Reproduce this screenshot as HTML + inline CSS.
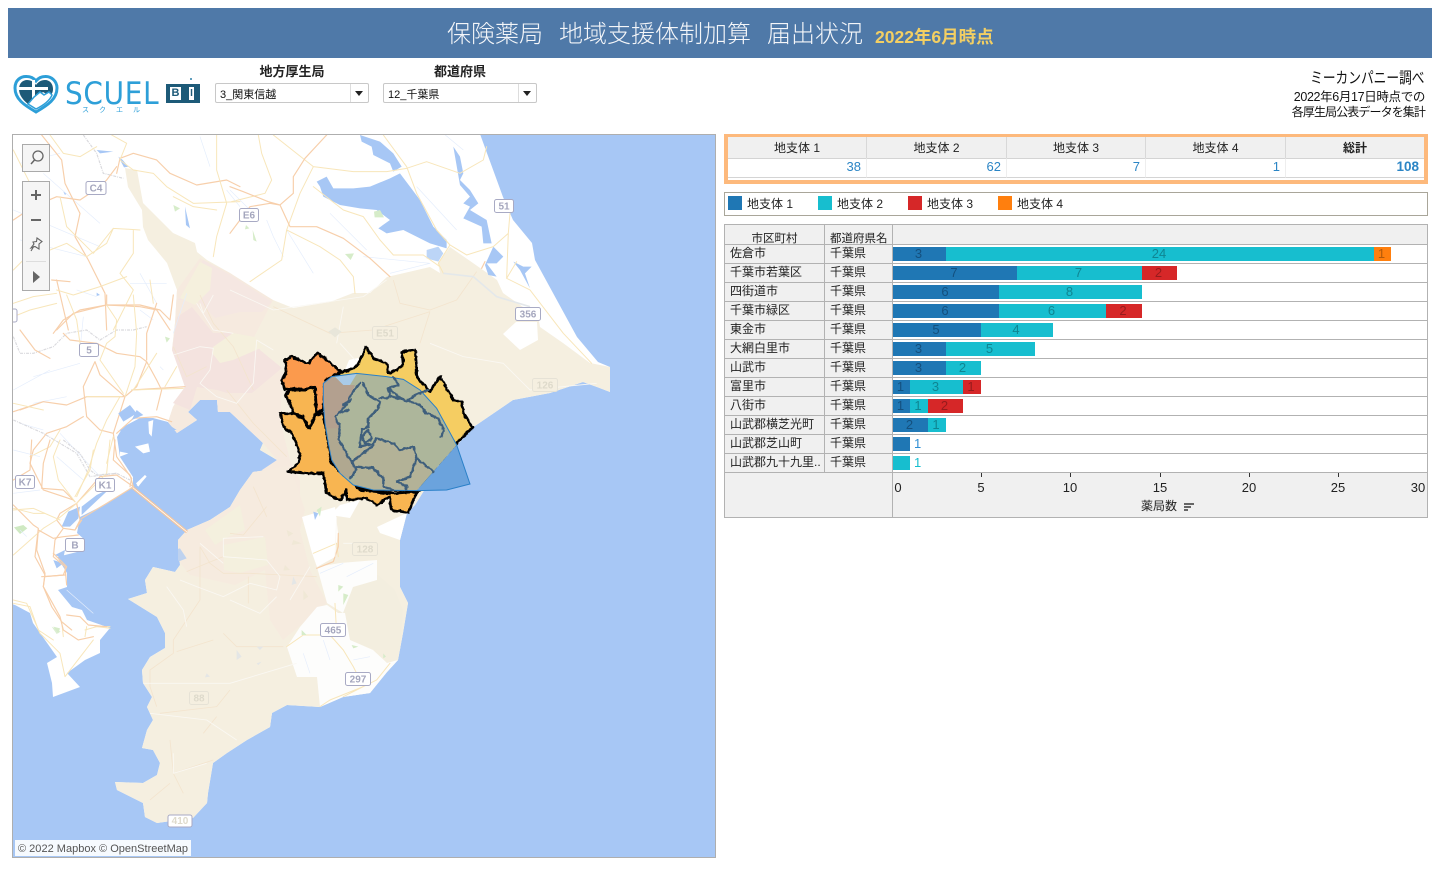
<!DOCTYPE html>
<html lang="ja"><head><meta charset="utf-8"><title>保険薬局 地域支援体制加算 届出状況</title>
<style>
html,body{margin:0;padding:0;background:#fff;width:1440px;height:870px;overflow:hidden}
body{font-family:"Liberation Sans","Noto Sans CJK JP",sans-serif;color:#222;position:relative}
.a{position:absolute;white-space:nowrap}
.sel{position:absolute;top:83px;width:152px;height:18px;border:1px solid #c8c8c8;border-radius:2px;background:#fff;font-size:11px;line-height:22px;text-indent:4px;color:#111}
.sel i{position:absolute;right:17px;top:0;height:18px;border-left:1px solid #ddd}
.sel b{position:absolute;right:5px;top:7px;border:4px solid transparent;border-top:5px solid #222;border-bottom:0}
.kh{position:absolute;top:137px;height:21px;background:#f0f0f0;border-right:1px solid #d8d8d8;font-size:12px;line-height:23px;text-align:center;color:#222}
.kv{position:absolute;top:158px;height:20px;border-top:1px solid #d4d4d4;border-bottom:1px solid #d4d4d4;border-right:1px solid #eee;font-size:13px;line-height:16px;text-align:right;color:#2b85c5;padding-right:5px;box-sizing:border-box}
.sw{position:absolute;top:196px;width:14px;height:14px}
.lg{position:absolute;top:196px;font-size:12px;line-height:17px;color:#222;white-space:nowrap}
.row{position:absolute;left:725px;width:702px;height:19px;border-bottom:1px solid #b2b2b2;box-sizing:border-box;font-size:12px;line-height:16px;color:#222}
.row u{text-decoration:none;position:absolute;left:5px;top:0}
.row s{text-decoration:none;position:absolute;left:105px;top:0}
.row .h{position:absolute;left:0;top:0;width:167px;height:18px;background:#f0f0f0}
.bars{position:absolute;left:168px;top:2px;height:14px;display:flex;font-size:13px;line-height:14px;text-align:center}
.bars span{display:block;height:14px;padding-right:2px;box-sizing:border-box}
.b1{background:#1f77b4;color:#14507e}.b2{background:#17becf;color:#0f8592}.b3{background:#d62728;color:#961b1c}.b4{background:#ff7f0e;color:#b3590a}
.tk{position:absolute;top:473px;width:1px;height:4px;background:#333}
.tl{position:absolute;top:480px;font-size:13px;line-height:16px;color:#222;width:30px;text-align:center}
.v{position:absolute;width:1px;background:#b2b2b2}
</style></head><body>

<div class="a" style="left:8px;top:8px;width:1424px;height:50px;background:#4f79a8"></div>
<div class="a" style="left:447px;top:14px;font-size:24px;line-height:36px;color:#f4f6f9;font-weight:300;font-family:'Noto Sans CJK JP',sans-serif">保険薬局</div>
<div class="a" style="left:559px;top:14px;font-size:24px;line-height:36px;color:#f4f6f9;font-weight:300;font-family:'Noto Sans CJK JP',sans-serif">地域支援体制加算</div>
<div class="a" style="left:767px;top:14px;font-size:24px;line-height:36px;color:#f4f6f9;font-weight:300;font-family:'Noto Sans CJK JP',sans-serif">届出状況</div>
<div class="a" style="left:875px;top:24px;font-size:17.500px;line-height:26px;color:#f3cf63;font-weight:bold">2022年6月時点</div>

<!-- logo -->
<svg class="a" style="left:13px;top:74px" width="46" height="41" viewBox="0 0 46 41">
<path d="M23 38C11 31 2 25 2 14C2 6 8 2 14 2.500C18 2.500 21 4.500 23 7C25 4.500 28 2.500 32 2.500C38 2 44 7 44 14C44 25 35 31 23 38Z" fill="#fff" stroke="#2d9fd8" stroke-width="3"/>
<path d="M6 15C6 9 10 6 14 6C18 6 21 8 23 11C25 8 28 6 32 6C37 6 40 10 40 15C40 18 39 20 37 22L30 18L26 21L21 24L15 30C10 26 6 21 6 15Z" fill="#1d5a78"/>
<path d="M19 6H22V13H35V16H22V24H19V16H6V13H19Z" fill="#fff"/>
<path d="M15 30L21 23L27 18L31 21L36 18L39 21C37 26 31 31 23 35Z" fill="#fff" stroke="#2d9fd8" stroke-width="1.500"/>
</svg>
<div class="a" style="left:65px;top:75px;font-size:31px;line-height:38px;color:#2d9fd8;letter-spacing:.8px;font-family:'DejaVu Sans','Liberation Sans',sans-serif;font-weight:normal;transform-origin:0 0;transform:scale(.9,1)">SCUEL</div>
<div class="a" style="left:82px;top:106px;font-size:7px;line-height:9px;color:#2d9fd8;letter-spacing:10px;font-family:'Noto Sans CJK JP',sans-serif">スクエル</div>
<div class="a" style="left:166px;top:84px;width:34px;height:19px;background:#1d5a78"></div>
<div class="a" style="left:170px;top:87px;width:11px;height:13px;background:#fff;color:#1d5a78;font:bold 11px/13px 'Liberation Sans',sans-serif;text-align:center">B</div>
<div class="a" style="left:189px;top:87px;width:5px;height:13px;background:#fff;color:#1d5a78;font:bold 10px/13px 'Liberation Sans',sans-serif;text-align:center">I</div>
<div class="a" style="left:190px;top:78px;width:2px;height:2px;background:#2d7fa8;border-radius:50%"></div>

<div class="a" style="left:232px;width:120px;top:63px;text-align:center;font-size:13px;line-height:18px;font-weight:bold;color:#222">地方厚生局</div>
<div class="sel" style="left:215px">3_関東信越<i></i><b></b></div>
<div class="a" style="left:400px;width:120px;top:63px;text-align:center;font-size:13px;line-height:18px;font-weight:bold;color:#222">都道府県</div>
<div class="sel" style="left:383px">12_千葉県<i></i><b></b></div>

<div class="a" style="right:15px;top:69px;font-size:15.500px;line-height:20px;color:#111;transform-origin:100% 50%;transform:scaleX(.82)">ミーカンパニー調べ</div>
<div class="a" style="right:15px;top:89px;font-size:12.500px;line-height:17px;color:#111;letter-spacing:-.35px">2022年6月17日時点での</div>
<div class="a" style="right:15px;top:104px;font-size:12px;line-height:17px;color:#111;letter-spacing:-.9px">各厚生局公表データを集計</div>

<!-- map -->
<svg class="a" style="left:0;top:0" width="1440" height="870" viewBox="0 0 1440 870">
<defs>
<clipPath id="mc"><rect x="13" y="135" width="702" height="722"/></clipPath>
<filter id="jag" x="-10%" y="-10%" width="120%" height="120%" color-interpolation-filters="sRGB"><feTurbulence type="fractalNoise" baseFrequency=".07" numOctaves="2" seed="4" result="n"/><feDisplacementMap in="SourceGraphic" in2="n" scale="10" xChannelSelector="R" yChannelSelector="G"/></filter>
<style>
.s text{font:bold 10px "Liberation Sans",sans-serif;fill:#a4a6bd;text-anchor:middle}
.f text{font:bold 10px "Liberation Sans",sans-serif;fill:#dedacb;text-anchor:middle}
.o{fill:none;stroke:#f7cfab;stroke-width:3.500;stroke-linejoin:round;stroke-linecap:round}
.y{fill:none;stroke:#f8e6ba;stroke-width:3;stroke-linejoin:round;stroke-linecap:round}
.w{fill:none;stroke:#e4edfc;stroke-width:2;stroke-linejoin:round}
.g{fill:none;stroke:#dadade;stroke-width:3.500;stroke-dasharray:9 3 3 3}
.fo{fill:none;stroke:#f3e4ce;stroke-width:2.500;stroke-linejoin:round}
.fw{fill:none;stroke:#faf8f3;stroke-width:2.500;stroke-linejoin:round}
.d{fill:none;stroke:#3f5f7c;stroke-width:7;stroke-linejoin:round;stroke-linecap:round}
</style>
</defs>
<g clip-path="url(#mc)">
<rect x="12" y="134" width="704" height="724" fill="#a7c7f5"/>
<polygon fill="#fff" points="12,134 480,134 503,197 513,220 532,243 535,260 553,293 577,337 598,362 610,367 610,392 597,387 583,382 550,393 513,400 472,428 440,465 415,505 407,513 400,540 400,587 408,603 403,633 398,660 387,672 370,693 343,697 320,707 287,705 272,713 270,727 247,740 227,753 213,763 208,793 207,803 193,818 157,823 145,817 143,803 117,790 115,782 143,783 157,775 160,763 153,750 142,748 147,730 153,720 147,707 152,697 143,683 142,670 150,657 165,648 165,633 157,617 128,599 147,593 145,580 153,567 175,572 180,565 178,540 187,530 210,520 230,507 240,490 253,472 267,470 277,460 260,450 263,443 230,412 218,412 217,400 200,400 188,412 197,420 177,433 168,422 153,418 140,418 123,427 117,437 120,457 133,477 133,487 123,493 100,507 80,517 77,533 85,540 77,552 57,557 67,573 67,587 58,590 72,607 82,610 87,620 110,628 100,640 100,653 85,660 67,673 80,687 53,697 52,683 47,663 57,657 33,623 30,613 15,605 12,604"/>
<!-- Chiba -->
<polygon fill="#f5efe0" points="125,168 137,170 143,203 173,233 195,243 197,252 207,260 230,273 250,287 273,300 293,308 330,302 353,293 370,293 387,277 430,267 440,273 438,263 450,247 483,270 497,280 503,293 523,307 537,310 540,327 563,343 590,363 610,367 610,392 597,387 583,382 550,393 513,400 472,428 440,465 415,505 407,513 400,540 400,587 408,603 403,633 398,660 387,672 370,693 343,697 320,707 287,705 272,713 270,727 247,740 227,753 213,763 208,793 207,803 193,818 157,823 145,817 143,803 117,790 115,782 143,783 157,775 160,763 153,750 142,748 147,730 153,720 147,707 152,697 143,683 142,670 150,657 165,648 165,633 157,617 128,599 147,593 145,580 153,567 175,572 180,565 178,540 187,530 210,520 230,507 240,490 253,472 267,470 277,460 260,450 263,443 230,412 218,412 217,400 200,400 188,412 197,420 177,433 168,422 173,407 185,387 180,370 172,350 175,323 177,290 167,263 148,240 143,227 142,210 128,187"/>
<!-- peach NW -->
<polygon fill="#f6eadf" points="168,422 173,407 185,387 180,370 172,350 175,323 177,290 200,258 230,273 273,300 250,345 262,360 283,372 280,420 290,460 300,480 300,520 262,470 277,460 263,443 230,412 218,412 217,400 200,400 188,412 197,420 177,433"/>
<polygon fill="#f4e3df" points="177,317 192,307 213,333 233,333 253,337 260,350 282,368 252,393 227,393 217,390 197,387 190,410 173,403 185,387 172,350"/>
<polygon fill="#f5e7e2" points="177,300 190,290 203,260 232,276 272,302 262,312 240,312 215,318 197,300"/>
<polygon fill="#f5f0dd" points="213,347 233,333 255,337 263,347 233,360 220,363 212,353"/>
<polygon fill="#f5f0dd" points="180,298 200,262 212,268 210,290 195,305"/>
<!-- peach SW -->
<polygon fill="#f6ebdf" points="178,540 187,530 210,520 230,507 240,490 253,472 267,470 290,465 305,510 300,530 310,570 327,603 283,640 270,620 265,570 235,585 190,575 178,560"/>
<polygon fill="#f4f0de" points="223,545 265,537 268,565 240,573 224,570"/>
<polygon fill="#f4f0de" points="205,530 240,505 245,530 228,537 215,545"/>
<polygon fill="#f3eedf" points="345,585 378,575 395,590 403,610 400,650 375,650 350,640 338,615"/>
<!-- white patches -->
<polygon fill="#fff" points="302,517 335,507 338,533 335,557 317,567 312,553"/>
<polygon fill="#fdfdfc" points="317,567 340,563 377,560 377,580 353,587 343,613 327,603"/>
<polygon fill="#fff" points="377,527 407,513 400,540 380,533"/>
<polygon fill="#fdfdfc" points="287,647 300,627 317,607 327,605 338,613 345,613 350,640 373,650 387,663 398,660 387,672 370,693 343,697 320,707 317,677 297,677"/>
<polygon fill="#fff" points="503,334 516,322 537,322 538,340 520,350"/>
<polygon fill="#fff" points="345,370 349,360 358,358 361,365 352,372"/>
<polygon fill="#fff" points="340,505 360,500 350,518 330,515"/>

<!-- Aqua line -->
<path d="M132 487L187 532" fill="none" stroke="#f6c69c" stroke-width="3"/>
<path d="M132 487L187 532" fill="none" stroke="#fff" stroke-width=".8"/>

<!-- north group: zoom coords -->
<g transform="translate(230,130) scale(.3333)">
<path fill="#a7c7f5" d="M260 155L290 140L310 175L370 175L420 170L480 145L510 130L540 170L570 210L610 290L650 330L650 355L600 340L520 300L470 310L445 295L480 270L440 240L390 235L330 225L280 200L270 170Z"/>
<path fill="#a7c7f5" d="M390 15L450 35L490 70L515 110L490 125L480 100L430 75L425 50L395 35Z"/>
<path fill="#a7c7f5" d="M670 50L690 80L700 130L690 150L720 180L745 220L720 240L770 270L785 340L760 340L755 290L700 265L720 230L700 220L720 200L690 165Z"/>
<path fill="#a7c7f5" d="M790 350L820 380L800 400L770 400L800 440L775 435L765 405Z"/>
<path fill="#a7c7f5" d="M850 395L880 410L905 410L885 430L900 475L870 420Z"/>
<path fill="#bcd5f7" d="M590 360L625 350L640 370L625 395L590 385Z"/>
<path fill="#d6ecc9" d="M345 372L372 370L362 390ZM432 245L450 240L462 262L434 262ZM48 285L58 295L45 298ZM68 300L80 335L70 330Z"/>
<path class="w" d="M110 270L130 320L160 380M0 180L60 240M300 250L410 360M170 300L250 430M400 380L600 400L480 430M700 60L640 10M560 170L680 300"/>
<path class="y" d="M85 15L95 70L125 150L105 190L5 215M130 15L250 110L370 125L470 125L530 115L590 95L690 130L760 90L770 50M460 15L530 110L560 190L620 300L660 345L710 375L790 350L835 310L840 250M250 110L210 190L170 300L155 390L60 455M170 300L270 350L330 390L370 440L375 490M250 170L340 240L400 260L450 330L490 375L580 375L630 410M660 345L625 400L640 430M835 310L830 445L900 480L1000 610L1085 700M830 445L860 395"/>
<path class="o" d="M290 15L225 85L190 140L190 190L150 225L115 215L40 185L0 170M0 310L30 270L60 230L120 220L150 225L180 290L260 290L340 325L420 385L480 440M765 395L755 415"/>
<path class="fo" d="M490 450L510 520L600 540L680 510L740 425M130 530L300 610L430 600L600 545M600 545L570 640"/>
<path class="fw" d="M0 480L130 540L400 500L470 450M320 640L340 530M330 640L420 740L560 790M600 640L700 680L820 700L900 780L1100 760"/>
<path fill="#e8e6da" d="M295 605L315 592L335 605L315 622Z"/>
<path fill="none" stroke="#e4e8ea" stroke-width="5" d="M640 430L730 440L800 500L900 530"/>
</g>

<!-- northwest -->
<g transform="translate(0,130) scale(.3333)">
<path fill="#a7c7f5" d="M355 80L368 90L385 110L372 112ZM290 60L340 65L300 70ZM190 185L200 190L195 195ZM290 488L300 495L290 498ZM555 230L570 295L558 285Z"/>
<path class="w" d="M60 100L180 70M130 130L300 280M40 240L300 350M60 330L260 380M600 20L630 110M680 180L720 230M390 460L500 460M420 430L470 520M230 480L290 500"/>
<path class="g" d="M250 15L290 70L310 130L370 145"/>
<path class="o" d="M125 15L185 90L195 160L240 250L225 320L265 390L315 490L320 600M350 130L360 85L400 70L470 90L510 130L590 165L680 150L720 170M320 150L350 110M40 270L100 230L170 200L240 210L300 170L320 150M155 450L210 455M170 450L205 600M170 600L220 550L320 525L420 530L470 540L510 600"/>
<path class="y" d="M335 15L380 40L360 90L400 120L460 130L500 170L580 220L720 215M650 15L650 120L680 220L650 320L640 380M150 15L190 70L240 80L290 50M40 60L90 160M180 200L200 290L280 370L340 295L420 300M340 295L320 340L260 380L200 340L150 360L90 370L40 420M400 300L400 370L360 430L400 480L340 600M170 480L220 495L300 470L380 440M40 520L100 500L170 490M450 450L460 520M520 200L580 230L650 240"/>
<path fill="#d6ecc9" d="M520 225L540 235L525 245Z"/>
</g>

<!-- Tokyo -->
<g transform="translate(0,290) scale(.3333)">
<path class="w" d="M40 300L150 240M100 260L240 220M100 340L200 320M250 80L240 180M480 230L490 240M420 60L460 90M560 10L520 130M180 430L300 560M60 400L130 420"/>
<path class="g" d="M40 140L60 190L100 190L160 170L200 130L260 120L300 150L350 120L400 120L440 110M40 390L130 430L230 490L270 560L350 550L390 570"/>
<path class="o" d="M150 205L105 180L60 120M160 130L190 90L240 60L320 45L420 45L480 60L510 90L520 15M190 130L210 150L290 160L350 190L420 200L440 215L470 270L485 300L470 360M440 215L410 290L375 320L300 255L285 215L250 290L260 380L300 420L340 430L350 500L395 565L390 590M470 40L440 130L440 210M320 15L320 45M60 360L130 335L200 345L260 320L330 320L375 320M40 365L130 335M250 380L200 410L140 430L100 480L90 520L130 600L220 630M375 320L340 430M350 430L400 385L470 380L515 395M395 300L555 290"/>
<path class="y" d="M320 45L350 90L345 140L320 160M400 15L410 130L405 230L375 320M200 15L230 90L240 160M470 190L400 300M40 340L130 360M320 160L300 210L370 310M40 80L90 60L170 40M260 320L330 320L365 320M360 320L320 390L290 460L265 540L230 620M180 420L150 470L90 500M395 300L550 295M530 230L495 290M340 440L320 520"/>
<path fill="#a7c7f5" d="M355 370L390 345L410 370L370 395ZM410 360L430 375L395 390ZM400 440L445 455L435 480L395 465ZM360 420L385 410L375 440ZM500 400L530 420L500 420Z"/>
<path fill="#fff" d="M405 470L445 460L450 485L430 490ZM360 485L385 490L360 500ZM408 580L435 555L440 560L415 588ZM445 395L460 390L455 440L447 430Z"/>
<path fill="#d6ecc9" d="M495 140L510 145L500 158Z"/>
<path class="fo" d="M520 170L560 260L620 230M600 15L640 100L700 170L760 300M680 300L760 400L860 500M760 590L800 680"/>
<path class="fw" d="M520 195L600 170L640 175L630 240L600 280L650 320L710 340L760 280L770 150L820 180M590 40L640 120L700 130M640 15L610 70L600 40"/>
</g>

<!-- Kawasaki / Yokohama -->
<g transform="translate(0,440) scale(.3333)">
<path fill="#a7c7f5" d="M185 260L205 215L240 200L235 235L210 260ZM245 200L290 165L330 145L245 225ZM165 345L195 330L190 355ZM160 360L190 370L170 385Z"/>
<path fill="#fff" d="M410 135L435 105L438 110L415 140Z"/>
<path class="o" d="M245 235L320 190L385 150L400 140L350 105L300 110L230 190L180 220L170 240L190 265L225 270L240 240L230 190M345 0L340 60L390 105L400 140M245 240L225 270M150 0L130 70L125 145L190 150L225 185M40 195L100 255L115 265L105 350L135 405L130 440L155 500L185 545L215 570M125 410L195 405M95 0L90 90L40 120M190 265L165 300L160 350L195 380L200 435"/>
<path class="y" d="M330 0L320 100L230 190L170 240L130 265L40 345M180 0L160 50L175 120L225 185M280 30L270 90L225 170M40 205L100 220L135 220M40 490L90 500L115 570L160 600M185 545L190 590M255 570L290 560L330 565"/>
<path class="w" d="M40 30L120 50M170 50L250 120M40 160L120 150M200 450L280 520"/>
<path fill="#cfe9c2" d="M42 262L70 255L82 265L60 282Z"/>
<path fill="#dceed2" d="M155 560L182 575L170 582Z"/>
<path class="g" d="M190 0L240 40L270 90L290 105L350 100"/>
</g>

<!-- south -->
<g transform="translate(10,500) scale(.3333)">
<path class="y" d="M10 30L70 25L150 60M10 300L50 310L90 400L150 460L165 530M255 380L300 380M230 380L225 410M165 530L250 420M830 440L880 405L960 405L1000 450L1030 500L1060 560L960 600L930 620M975 310L980 400M910 160L980 130L985 170M1000 590L1100 540L1140 490"/>
<path class="o" d="M85 90L130 115L160 110L205 105M85 90L80 150L105 220L100 260L150 350L160 390L205 420L250 410M105 230L160 225L170 200L130 160M170 345L210 350L235 375L290 380M985 100L985 140L970 185L920 205"/>
<path class="w" d="M880 460L900 520M940 420L960 480M1010 230L1090 190M930 220L1000 190M1030 480L1080 470M30 90L50 110"/>
<path class="fo" d="M570 140L600 190L640 220L720 220L820 225L920 230M530 215L590 190L640 170M570 140L570 300L530 360L490 420L490 460L420 510L420 560L440 620M715 230L715 310M640 400L680 440L820 440M610 420L500 455M660 100L700 105L770 20M450 640L620 620L660 570M580 700L620 650M480 720L490 820L610 780M420 900L480 850M490 820L520 880"/>
<path class="fw" d="M510 240L560 260L640 290L720 250L800 270L810 230L770 180L640 170L640 115L760 110M570 130L640 190M470 260L520 330L530 380M660 300L750 340L800 290M400 550L660 550L860 490M420 640L590 660L680 720M490 760L490 820L590 790M980 50L975 170M1000 130L1100 130M840 300L900 200"/>
<path fill="#e4e6e6" d="M680 450L695 470L680 480ZM740 440L760 440L750 450ZM590 520L600 530L585 532ZM850 230L860 250L845 255ZM740 490L755 485L745 495Z"/>
<path fill="#f0e8d6" d="M830 90L850 100L835 110ZM850 120L875 130L845 135ZM825 195L840 210L820 212ZM880 270L895 290L880 300Z"/>
<path fill="#a7c7f5" d="M490 150L510 145L530 175L505 185Z" opacity=".7"/>
<path fill="#d6ecc9" d="M985 255L1000 260L985 275ZM1000 280L1015 285L1000 315ZM130 380L150 385L145 400ZM875 390L890 405L875 405ZM1025 435L1045 440L1030 445ZM1120 460L1128 470L1120 475ZM920 30L935 20L930 50Z"/>
<path fill="#a7c7f5" d="M910 35L925 40L915 60Z"/>
</g>

<!-- shields -->
<g class="s">
<g transform="translate(96,188)"><rect x="-10" y="-6.500" width="20" height="13" rx="2" fill="#fff" stroke="#a8aac4"/><text y="3.500">C4</text></g>
<g transform="translate(249,215)"><rect x="-9.500" y="-6.500" width="19" height="13" rx="2" fill="#fff" stroke="#a8aac4"/><text y="3.500">E6</text></g>
<g transform="translate(504,206)"><rect x="-9.500" y="-6.500" width="19" height="13" rx="2" fill="#fff" stroke="#a8aac4"/><text y="3.500">51</text></g>
<g transform="translate(89,350)"><rect x="-9.500" y="-6.500" width="19" height="13" rx="2" fill="#fff" stroke="#a8aac4"/><text y="3.500">5</text></g>
<g transform="translate(528,314)"><rect x="-12.500" y="-6.500" width="25" height="13" rx="2" fill="#fff" stroke="#a8aac4"/><text y="3.500">356</text></g>
<g transform="translate(25,482)"><rect x="-9.500" y="-6.500" width="19" height="13" rx="2" fill="#fff" stroke="#a8aac4"/><text y="3.500">K7</text></g>
<g transform="translate(105,485)"><rect x="-9.500" y="-6.500" width="19" height="13" rx="2" fill="#fff" stroke="#a8aac4"/><text y="3.500">K1</text></g>
<g transform="translate(75,545)"><rect x="-9.500" y="-6.500" width="19" height="13" rx="2" fill="#fff" stroke="#a8aac4"/><text y="3.500">B</text></g>
<g transform="translate(333,630)"><rect x="-12.500" y="-6.500" width="25" height="13" rx="2" fill="#fff" stroke="#a8aac4"/><text y="3.500">465</text></g>
<g transform="translate(358,679)"><rect x="-12.500" y="-6.500" width="25" height="13" rx="2" fill="#fff" stroke="#a8aac4"/><text y="3.500">297</text></g>
<rect x="4" y="309" width="13" height="13" rx="2" fill="#fff" stroke="#a8aac4"/>
<rect x="168" y="815" width="24" height="12" rx="2" fill="#fff" stroke="#a8aac4"/>
</g>
<g class="f">
<g transform="translate(385,333)"><rect x="-12.500" y="-6.500" width="25" height="13" rx="2" fill="#f5efe0" stroke="#e6e2d6"/><text y="3.500">E51</text></g>
<g transform="translate(545,385)"><rect x="-12.500" y="-6.500" width="25" height="13" rx="2" fill="#f5efe0" stroke="#e6e2d6"/><text y="3.500">126</text></g>
<g transform="translate(365,549)"><rect x="-12.500" y="-6.500" width="25" height="13" rx="2" fill="#f5efe0" stroke="#e6e2d6"/><text y="3.500">128</text></g>
<g transform="translate(199,698)"><rect x="-9.500" y="-6.500" width="19" height="13" rx="2" fill="#f5efe0" stroke="#e6e2d6"/><text y="3.500">88</text></g>
<text x="180" y="824">410</text>
</g>

<!-- choropleth -->
<g transform="translate(260,330) scale(.3333)">
<g filter="url(#jag)" stroke-linejoin="round">
<path fill="#f5cd62" stroke="#000" stroke-width="8" d="M290 110L318 50L340 85L380 100L385 130L410 120L430 105L425 65L465 60L470 110L470 140L510 185L540 140L580 210L605 215L610 250L638 292L590 340L520 420L480 480L340 480L280 470L200 260L240 130Z"/>
<path fill="#f8b551" stroke="#000" stroke-width="8" d="M60 250L100 250L130 265L150 295L165 255L190 250L215 400L280 460L300 480L400 490L470 485L445 548L395 540L390 500L350 525L320 505L260 510L260 480L240 510L200 490L190 430L140 430L85 425L115 400L120 370L95 310L70 290Z"/>
<path fill="#f8b551" stroke="#000" stroke-width="8" d="M90 180L130 180L165 170L170 250L145 295L130 260L100 250L90 220L75 195Z"/>
<path fill="#fb9a4d" stroke="#000" stroke-width="8" d="M75 90L95 80L145 100L172 68L245 125L225 135L195 150L190 240L170 250L165 170L130 180L95 175L75 180L65 150L80 125Z"/>
</g>
<!-- flat opaque regions inside the service-area overlay -->
<path fill="#adb69b" d="M190 160L215 140L290 130L380 140L430 148L480 180L530 235L560 290L590 345L520 425L470 482L340 480L280 465L240 430L215 390L205 340L195 280L190 220Z"/>
<path fill="#b3b297" d="M300 350L340 340L350 325L400 340L420 360L460 350L470 385L515 425L470 482L340 480L280 465L290 420L275 395Z"/>
<path fill="#b3a08f" d="M190 160L215 140L230 145L250 165L285 165L275 190L255 230L225 260L240 295L197 295L190 220Z"/>
<path fill="#b0a890" d="M197 295L240 295L235 330L260 370L275 395L290 420L270 448L240 430L215 390L205 340Z"/>
<path fill="#a9cbe8" d="M225 140L290 132L270 165L250 165Z"/>
<path fill="#6ba3dd" d="M590 345L630 462L560 480L470 482L520 425Z"/>
<path fill="none" stroke="#2a80c8" stroke-width="3" d="M190 160L215 140L290 130L380 140L430 148L480 180L530 235L560 290L590 345L630 462L560 480L470 482L340 480L280 465L240 430L215 390L205 340L195 280L190 220Z"/>
<g filter="url(#jag)">
<path class="d" d="M300 160L275 190L255 230L225 260L240 290L235 330L260 370L275 395L290 420L270 445M310 160L325 195L360 215L350 240L325 265L325 290L305 300L300 350M385 175L420 205L440 212L480 225L500 250L535 265L550 300L545 320M360 205L395 200L440 212L465 195L505 180M400 140L415 165L385 175L390 195M300 350L340 340L350 325L400 340L420 360L460 350L470 385L520 425M275 395L310 370L340 345M290 410L340 415L370 445L370 470L400 480M410 455L450 440L470 385M410 455L440 470L440 480M305 320L325 300L335 325L315 340ZM250 225L275 210M235 250L265 240"/>
</g>
</g>

<!-- attribution -->
<rect x="15" y="840" width="176" height="16" fill="#fff" fill-opacity=".9"/>
<text x="18" y="852" style="font:11px 'Liberation Sans',sans-serif;fill:#555" textLength="170" lengthAdjust="spacing">© 2022 Mapbox © OpenStreetMap</text>

<!-- controls -->
<rect x="22.500" y="144.500" width="27" height="27" fill="#f5f5f5" stroke="#aaa"/>
<circle cx="38" cy="156" r="5" fill="none" stroke="#666" stroke-width="1.300"/>
<path d="M34.500 160L31 164" stroke="#666" stroke-width="1.500"/>
<rect x="22.500" y="181.500" width="27" height="109" fill="#f5f5f5" stroke="#aaa"/>
<path d="M31 195H41M36 190V200" stroke="#666" stroke-width="2"/>
<path d="M31 220H41" stroke="#666" stroke-width="2"/>
<path d="M37 238L42 241.500L39 244L39 249L35 246.500L31 248L34 244L33 242L36.500 241.500Z M34 246L31 251" fill="none" stroke="#666" stroke-width="1.100"/>
<path d="M26 261.500H46" stroke="#ddd"/>
<path d="M33 271L40 277L33 283Z" fill="#666"/>
</g>
<rect x="12.500" y="134.500" width="703" height="723" fill="none" stroke="#aeaeae"/>
</svg>

<!-- KPI -->
<div class="a" style="left:724px;top:134px;width:696px;height:42px;border:4px solid #fdb97c;background:#fff"></div>
<div class="kh" style="left:728px;width:138px">地支体 1</div>
<div class="kh" style="left:867px;width:139px">地支体 2</div>
<div class="kh" style="left:1007px;width:138px">地支体 3</div>
<div class="kh" style="left:1146px;width:139px">地支体 4</div>
<div class="kh" style="left:1286px;width:138px;border-right:0;font-weight:bold">総計</div>
<div class="kv" style="left:728px;width:139px">38</div>
<div class="kv" style="left:867px;width:140px">62</div>
<div class="kv" style="left:1007px;width:139px">7</div>
<div class="kv" style="left:1146px;width:140px">1</div>
<div class="kv" style="left:1286px;width:138px;border-right:0;font-weight:bold;font-size:13.500px">108</div>

<!-- legend -->
<div class="a" style="left:724px;top:192px;width:702px;height:22px;border:1px solid #a9a69a"></div>
<div class="sw" style="left:728px;background:#1f77b4"></div><div class="lg" style="left:747px">地支体 1</div>
<div class="sw" style="left:818px;background:#17becf"></div><div class="lg" style="left:837px">地支体 2</div>
<div class="sw" style="left:908px;background:#d62728"></div><div class="lg" style="left:927px">地支体 3</div>
<div class="sw" style="left:998px;background:#ff7f0e"></div><div class="lg" style="left:1017px">地支体 4</div>

<!-- chart -->
<div class="a" style="left:725px;top:225px;width:702px;height:20px;background:#f0f0f0"></div>
<div class="a" style="left:725px;top:473px;width:702px;height:44px;background:#f0f0f0"></div>
<div class="a" style="left:725px;top:232px;width:99px;text-align:center;font-size:11.500px;line-height:14px;color:#222">市区町村</div>
<div class="a" style="left:830px;top:232px;font-size:11.500px;line-height:14px;color:#222">都道府県名</div>

<div class="row" style="top:245px"><div class="h"></div><u>佐倉市</u><s>千葉県</s><div class="bars"><span class="b1" style="width:53px">3</span><span class="b2" style="width:428px">24</span><span class="b4" style="width:17px">1</span></div></div>
<div class="row" style="top:264px"><div class="h"></div><u>千葉市若葉区</u><s>千葉県</s><div class="bars"><span class="b1" style="width:124px">7</span><span class="b2" style="width:125px">7</span><span class="b3" style="width:35px">2</span></div></div>
<div class="row" style="top:283px"><div class="h"></div><u>四街道市</u><s>千葉県</s><div class="bars"><span class="b1" style="width:106px">6</span><span class="b2" style="width:143px">8</span></div></div>
<div class="row" style="top:302px"><div class="h"></div><u>千葉市緑区</u><s>千葉県</s><div class="bars"><span class="b1" style="width:106px">6</span><span class="b2" style="width:107px">6</span><span class="b3" style="width:36px">2</span></div></div>
<div class="row" style="top:321px"><div class="h"></div><u>東金市</u><s>千葉県</s><div class="bars"><span class="b1" style="width:88px">5</span><span class="b2" style="width:72px">4</span></div></div>
<div class="row" style="top:340px"><div class="h"></div><u>大網白里市</u><s>千葉県</s><div class="bars"><span class="b1" style="width:53px">3</span><span class="b2" style="width:89px">5</span></div></div>
<div class="row" style="top:359px"><div class="h"></div><u>山武市</u><s>千葉県</s><div class="bars"><span class="b1" style="width:53px">3</span><span class="b2" style="width:35px">2</span></div></div>
<div class="row" style="top:378px"><div class="h"></div><u>富里市</u><s>千葉県</s><div class="bars"><span class="b1" style="width:17px">1</span><span class="b2" style="width:53px">3</span><span class="b3" style="width:18px">1</span></div></div>
<div class="row" style="top:397px"><div class="h"></div><u>八街市</u><s>千葉県</s><div class="bars"><span class="b1" style="width:17px">1</span><span class="b2" style="width:18px">1</span><span class="b3" style="width:35px">2</span></div></div>
<div class="row" style="top:416px"><div class="h"></div><u>山武郡横芝光町</u><s>千葉県</s><div class="bars"><span class="b1" style="width:35px">2</span><span class="b2" style="width:18px">1</span></div></div>
<div class="row" style="top:435px"><div class="h"></div><u>山武郡芝山町</u><s>千葉県</s><div class="bars"><span class="b1" style="width:17px"></span><span style="margin-left:4px;color:#2f8fd4">1</span></div></div>
<div class="row" style="top:454px"><div class="h"></div><u>山武郡九十九里..</u><s>千葉県</s><div class="bars"><span class="b2" style="width:17px"></span><span style="margin-left:4px;color:#17becf">1</span></div></div>

<div class="a" style="left:725px;top:244px;width:702px;height:1px;background:#b2b2b2"></div>
<div class="a" style="left:724px;top:224px;width:704px;height:294px;box-sizing:border-box;border:1px solid #b2b2b2"></div>
<div class="v" style="left:824px;top:225px;height:248px"></div>
<div class="v" style="left:892px;top:225px;height:292px"></div>

<div class="tk" style="left:981px"></div><div class="tk" style="left:1070px"></div><div class="tk" style="left:1160px"></div><div class="tk" style="left:1249px"></div><div class="tk" style="left:1338px"></div>
<div class="tl" style="left:883px">0</div>
<div class="tl" style="left:966px">5</div>
<div class="tl" style="left:1055px">10</div>
<div class="tl" style="left:1145px">15</div>
<div class="tl" style="left:1234px">20</div>
<div class="tl" style="left:1323px">25</div>
<div class="tl" style="left:1403px">30</div>
<div class="a" style="left:1141px;top:498px;font-size:12px;line-height:17px;color:#222">薬局数</div>
<div class="a" style="left:1184px;top:503px;width:10px;height:2px;background:#666"></div>
<div class="a" style="left:1184px;top:506px;width:7px;height:2px;background:#666"></div>
<div class="a" style="left:1184px;top:509px;width:4px;height:2px;background:#666"></div>

</body></html>
